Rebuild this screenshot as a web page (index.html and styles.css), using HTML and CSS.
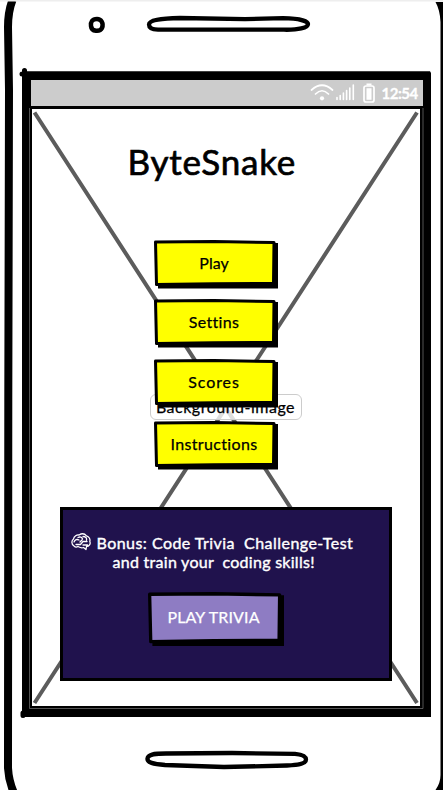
FILE: index.html
```html
<!DOCTYPE html>
<html lang="en">
<head>
<meta charset="utf-8">
<title>ByteSnake</title>
<link rel="stylesheet" href="styles.css">
</head>
<body>
<svg class="defs" width="0" height="0" aria-hidden="true">
  <symbol id="sketch-button" viewBox="0 0 124 49" preserveAspectRatio="none">
    <path d="M4 5L121 3L124 3V48.500H4Z" fill="#000"/>
    <path d="M1.500 2L60 1.600L120 2.600L119.500 43.500L60 43.800L2.500 44.600Z" fill="currentColor" stroke="#000" stroke-width="3" stroke-linejoin="round"/>
  </symbol>
</svg>
<main class="phone">
  <svg class="shell" viewBox="0 0 443 790" fill="none" stroke="#000" aria-hidden="true">
    <path d="M12.500 0C9 9 8 17 8 27L9 90L8.300 400L8 768C8.500 777 10 784 14 793" stroke-width="8"/>
    <path d="M435.500 2H443V790H435.500Q440.500 783 440.500 775V22Q440 10 435.500 2Z" fill="#000" stroke="none"/>
    <path d="M0 0H443V1.500H0Z" fill="#eee" stroke="none"/>
    <path d="M97 19C92 19 90.500 22 91 26C91.500 32 100 32 102 28C104 23 101 19 97 19Z" stroke-width="4.500"/>
    <path d="M149 24.500C149 20 160 18.500 180 18L245 19.200L283 18.200C299 18.500 308 21 308 24C308 28 298 30 284 29.700H158C152 29.500 149 28 149 24.500Z" stroke-width="4.300"/>
    <path d="M147.500 758.500C148 754.500 153 753.500 166 753.500L232 753L295 753.800C302 754.500 306 756.500 306 759.500C306 763.500 300 765 287 765.500L224 767L165 765C153 764 147 762.500 147.500 758.500Z" stroke-width="4.300"/>
    <path d="M22 71.300H430L431 73V717H22Z" fill="#000" stroke="none"/>
    <path d="M24.500 70.500V76M22 74H26M23 713V715.500" stroke-width="5" stroke-linecap="round"/>
    <path d="M29.500 108V708.500H423V108" stroke="#777" stroke-width=".7"/>
  </svg>
  <section class="screen">
    <header class="status">
      <svg class="wifi" viewBox="0 0 24 17" fill="none" stroke="#fff" stroke-width="1.700" stroke-linecap="round"><path d="M1.500 6Q12 -3.500 22.500 6M5.500 10Q12 3.500 18.500 10"/><circle cx="12" cy="14.300" r="2.100" fill="#fff" stroke="none"/></svg>
      <svg class="signal" viewBox="0 0 19 17" stroke="#fff" stroke-width="1.600" stroke-linecap="round"><path d="M1 13.500V15.500M4.200 11.500V15.500M7.400 9V15.500M10.600 6.500V15.500M13.800 4V15.500M17.300 1V15.500"/></svg>
      <svg class="battery" viewBox="0 0 12 20"><rect x="1" y="3" width="10" height="16" rx="2" fill="none" stroke="#fff" stroke-width="1.700"/><path d="M3.500 .5H8.500V2.500H3.500ZM3.500 5.300H8.500V16.700H3.500Z" fill="#fff"/></svg>
      <span class="clock">12:54</span>
    </header>
    <div class="content">
      <svg class="cross" viewBox="0 0 388 597" stroke="#5c5c5c" stroke-width="4" aria-hidden="true"><path d="M2.500 3.500L385 594M385 3.500L2.500 594"/></svg>
      <span class="image-label">Background-image</span>
      <h1 class="title">ByteSnake</h1>
      <nav class="menu">
        <button class="item"><svg class="face"><use href="#sketch-button"/></svg><span class="t-play">Play</span></button>
        <button class="item"><svg class="face"><use href="#sketch-button"/></svg><span class="t-settings">Settins</span></button>
        <button class="item"><svg class="face"><use href="#sketch-button"/></svg><span class="t-scores">Scores</span></button>
        <button class="item"><svg class="face"><use href="#sketch-button"/></svg><span class="t-help">Instructions</span></button>
      </nav>
      <section class="bonus">
        <div class="line first">
          <svg class="brain" viewBox="0 0 20 18" fill="none" stroke="#fff" stroke-width="1.300" stroke-linecap="round" stroke-linejoin="round"><path d="M3 13C0 11 .5 7.500 2.500 6C3 3 6 1.500 8 2C11 0 14 1 15.500 2.800C18 3.500 19.500 6 18.800 8.500C20 11 18 13.500 15.500 13.500L15 16.500L12.500 14.500C10 15.500 8 14 7 13.500C5.500 14.500 4 14 3 13ZM3 9C4 6.500 6 6 8 7M7 4.500C9 3.500 11 4 11.500 6M12 3.500C14.500 3.500 16 5 15.500 7M5 11.500H9.500L12 8.500H16M9 9L11 7M12 12H16.500"/></svg>
          <span class="t-bonus">Bonus: Code Trivia&nbsp; Challenge-Test</span>
        </div>
        <div class="line second"><span class="t-train">and train your&nbsp; coding skills!</span></div>
        <button class="item trivia"><svg class="face"><use href="#sketch-button"/></svg><span class="t-trivia">PLAY TRIVIA</span></button>
      </section>
    </div>
  </section>
</main>
</body>
</html>
```
FILE: styles.css
```css
* { box-sizing: border-box; }
body { margin: 0; background: #fff; color: #000; font-family: Lato, "Liberation Sans", sans-serif; font-variant-ligatures: none; }
.defs { position: absolute; }
.phone { position: relative; width: 443px; height: 790px; overflow: hidden; padding: 80px 20px 0 30.5px; }
.shell { position: absolute; inset: 0; width: 443px; height: 790px; }
.screen { position: relative; width: 392.5px; }
.status { display: flex; align-items: center; height: 25.5px; background: #ccc; color: #fff; padding-left: 279px; }
.wifi { width: 24px; height: 17px; }
.signal { width: 19px; height: 17px; margin-left: 2px; }
.battery { width: 12px; height: 20px; margin-left: 8px; }
.clock { margin-left: 7px; font-size: 15px; font-weight: 700; line-height: 20px; letter-spacing: -.5px; -webkit-text-stroke: .3px #fff; }
.content { position: relative; display: flex; flex-direction: column; align-items: flex-start; width: 388px; height: 597px; margin: 3px 0 0 1.5px; background: #fff; }
.cross { position: absolute; inset: 0; width: 388px; height: 597px; }
.image-label { position: absolute; left: 117.500px; top: 285.500px; width: 152px; height: 26px; border: 1px solid #ccc; border-radius: 6px; background: rgba(255, 255, 255, .8); font-size: 16px; line-height: 23px; letter-spacing: .5px; text-align: center; white-space: nowrap; -webkit-text-stroke: .25px #000; }
.title { position: relative; margin: 30px 0 0 95.500px; height: 44px; font-size: 35px; line-height: 44px; letter-spacing: .8px; font-weight: 400; white-space: nowrap; -webkit-text-stroke: .7px #000; }
.menu { position: relative; display: grid; grid-template-rows: 59px 60px 62px 49px; margin: 57px 0 0 122px; }
.item { position: relative; display: flex; justify-content: center; width: 124px; height: 49px; border: 0; padding: 0 4px 0 0; background: none; color: #ff0; font: 16px/46px Lato, "Liberation Sans", sans-serif; font-variant-ligatures: none; }
.item span { position: relative; color: #000; white-space: nowrap; -webkit-text-stroke: .25px currentColor; }
.item .t-settings { letter-spacing: .3px; line-height: 45px; }
.item .t-scores { letter-spacing: .9px; line-height: 45px; }
.item .t-help { letter-spacing: .35px; }
.face { position: absolute; inset: 0; width: 100%; height: 100%; }
.bonus { position: relative; width: 332px; height: 174px; margin: 37px 0 0 27.500px; border: 3.500px solid #000; background: #20124d; color: #fff; padding: 23px 0 0 8px; }
.line { display: flex; height: 19px; font-size: 16px; line-height: 19px; white-space: nowrap; -webkit-text-stroke: .4px #fff; }
.first { letter-spacing: .46px; }
.second { padding-left: 42px; letter-spacing: .28px; }
.brain { width: 20px; height: 18px; margin-right: 6px; }
.trivia { width: 136px; height: 54.500px; margin: 21.500px 0 0 77px; color: #8e7cc3; line-height: 50px; }
.item .t-trivia { color: #fff; letter-spacing: .15px; }
```
